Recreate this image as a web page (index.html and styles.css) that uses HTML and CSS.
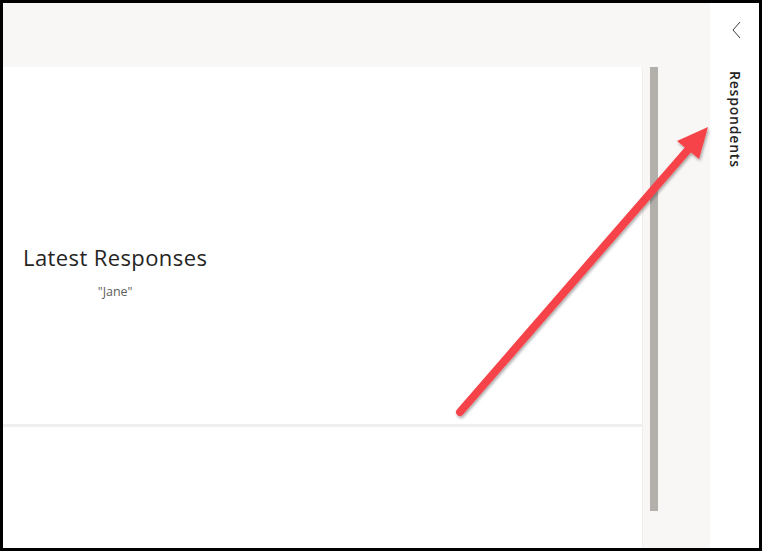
FILE: index.html
```html
<!DOCTYPE html>
<html>
<head>
<meta charset="utf-8">
<link rel="stylesheet" href="styles.css">
</head>
<body>
<div class="frame">
  <div class="main">
    <div class="topbar"></div>
    <div class="body-row">
      <div class="card">
        <div class="card-top">
          <div class="summary">
            <div class="title">Latest Responses</div>
            <div class="value">"Jane"</div>
          </div>
        </div>
        <div class="divider"></div>
        <div class="card-bottom"></div>
      </div>
      <div class="gutter">
        <div class="thumb"></div>
      </div>
    </div>
  </div>
  <div class="side">
    <button class="collapse" aria-label="Collapse">
      <svg width="10" height="18" viewBox="0 0 10 18"><path d="M8 1 L1 9 L8 17" fill="none" stroke="#3b3a39" stroke-width="1"/></svg>
    </button>
    <div class="side-label">Respondents</div>
  </div>
  <svg class="arrow" width="762" height="551" viewBox="0 0 762 551">
    <defs>
      <filter id="sh" x="-20%" y="-20%" width="140%" height="140%">
        <feDropShadow dx="1" dy="2" stdDeviation="1.5" flood-color="#000" flood-opacity="0.35"/>
      </filter>
    </defs>
    <g filter="url(#sh)">
      <line x1="460" y1="412" x2="693" y2="144" stroke="#f64348" stroke-width="8" stroke-linecap="round"/>
      <polygon points="708,127 677,141 699,159" fill="#f64348"/>
    </g>
  </svg>
</div>
</body>
</html>
```

FILE: styles.css
```css
html, body {
  margin: 0;
  padding: 0;
  background: #000;
}
.frame {
  position: relative;
  box-sizing: border-box;
  width: 762px;
  height: 551px;
  border: 3px solid #000;
  display: flex;
  background: #fff;
  overflow: hidden;
  font-family: "Open Sans", "Noto Sans", sans-serif;
}
.main {
  flex: 1;
  display: flex;
  flex-direction: column;
  background: #f8f7f5;
}
.topbar {
  height: 64px;
  flex: none;
}
.body-row {
  flex: 1;
  display: flex;
}
.card {
  width: 639px;
  background: #fff;
  border-right: 1px solid #efeeec;
  display: flex;
  flex-direction: column;
}
.card-top {
  height: 357px;
  box-sizing: border-box;
  padding: 175px 0 0 20px;
}
.summary {
  display: inline-flex;
  flex-direction: column;
  align-items: center;
}
.title {
  font-size: 22px;
  line-height: 30px;
  color: #252423;
  font-weight: 500;
  letter-spacing: 0.4px;
}
.value {
  margin-top: 12px;
  font-size: 12.5px;
  line-height: 16px;
  color: #605e5c;
}
.divider {
  height: 3px;
  background: #efefef;
}
.card-bottom {
  flex: 1;
}
.gutter {
  flex: 1;
  padding-left: 7px;
}
.thumb {
  width: 8px;
  height: 444px;
  background: #b3afab;
}
.side {
  width: 49px;
  background: #fff;
  display: flex;
  flex-direction: column;
  align-items: center;
}
.collapse {
  margin-top: 18px;
  margin-left: 4px;
  padding: 0;
  border: 0;
  background: none;
  width: 10px;
  height: 18px;
  display: block;
}
.collapse svg {
  display: block;
}
.side-label {
  margin-top: 32px;
  margin-left: 2px;
  writing-mode: vertical-rl;
  font-size: 14px;
  font-weight: 600;
  color: #252423;
  letter-spacing: 0.8px;
}
.arrow {
  position: absolute;
  left: -3px;
  top: -3px;
  pointer-events: none;
}
```
